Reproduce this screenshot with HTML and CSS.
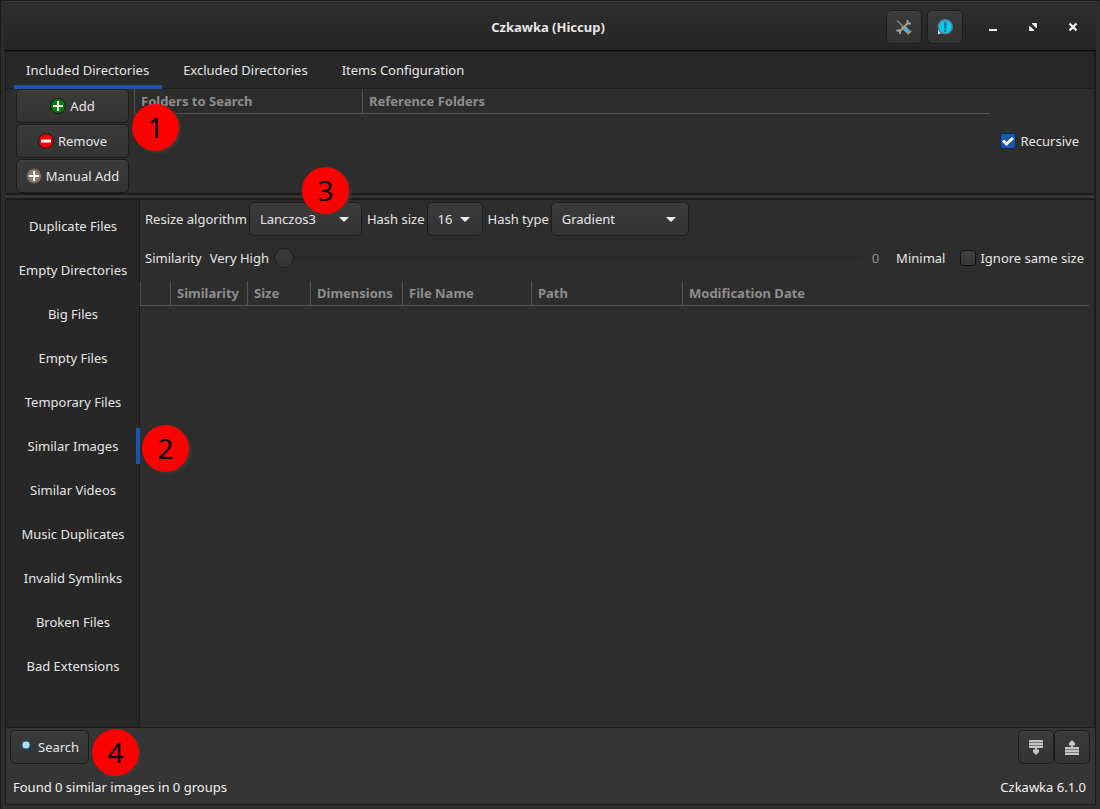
FILE: index.html
```html
<!DOCTYPE html>
<html lang="en">
<head>
<meta charset="utf-8">
<title>Czkawka (Hiccup)</title>
<link rel="stylesheet" href="styles.css">
</head>
<body>
<div class="window">
  <header class="titlebar">
    <h1 class="title">Czkawka (Hiccup)</h1>
    <div class="title-actions">
      <button class="btn icon-btn" type="button" aria-label="Settings">
        <svg width="16" height="16" viewBox="0 0 16 16">
          <path d="M1 1.500L8 8.500" stroke="#8b8b8b" stroke-width="1.500"/>
          <path d="M3 13L12 4" stroke="#9d9d9d" stroke-width="2"/>
          <path d="M11.500 1v3.500H15M.5 11.500H4V15" stroke="#a4a4a4" stroke-width="1.800" fill="none"/>
          <path d="M5.500 9.500l4-3" stroke="#c9971c" stroke-width="1.800"/>
          <path d="M8 8.500L13 13.500" stroke="#5fa9d3" stroke-width="4.500"/>
          <path d="M11.500 15.500l4-3.500" stroke="#b59a35" stroke-width="1.300"/>
        </svg>
      </button>
      <button class="btn icon-btn" type="button" aria-label="About">
        <svg width="16" height="16" viewBox="0 0 16 16">
          <path d="M1 10.500v5l4-1.500z" fill="#d8d8d8"/>
          <circle cx="8.300" cy="7.800" r="7" fill="#00ccf8" stroke="#5b7c86" stroke-width="1.400"/>
          <path d="M7.300 3h2v6.700h-2zM7.300 10.700h2v2h-2z" fill="#28626f"/>
        </svg>
      </button>
    </div>
    <div class="window-controls">
      <button class="control" type="button" aria-label="Minimize"><svg width="16" height="16" viewBox="0 0 16 16"><path d="M4 10h8v2H4z" fill="#eee"/></svg></button>
      <button class="control" type="button" aria-label="Restore"><svg width="16" height="16" viewBox="0 0 16 16"><path d="M7 4h5v5h-1L7 5zM4 7h1l4 4v1H4z" fill="#eee"/></svg></button>
      <button class="control" type="button" aria-label="Close"><svg width="16" height="16" viewBox="0 0 16 16"><path d="M4.500 4.500l7 7M11.500 4.500l-7 7" stroke="#eee" stroke-width="2.300"/></svg></button>
    </div>
  </header>

  <main class="body">
    <section class="upper">
      <nav class="tabs">
        <button class="tab tab-active" type="button">Included Directories</button>
        <button class="tab" type="button">Excluded Directories</button>
        <button class="tab" type="button">Items Configuration</button>
      </nav>
      <div class="directories">
        <div class="dir-buttons">
          <button class="btn" type="button"><svg width="16" height="16" viewBox="0 0 16 16"><circle cx="8" cy="8" r="7.400" fill="#078007" stroke="#171717"/><path d="M8 3v10M3 8h10" stroke="#fff" stroke-width="2"/></svg>Add</button>
          <button class="btn" type="button"><svg width="16" height="16" viewBox="0 0 16 16"><circle cx="8" cy="8" r="7.400" fill="#f00" stroke="#171717"/><path d="M3 8h10" stroke="#fff" stroke-width="3"/></svg>Remove</button>
          <button class="btn" type="button"><svg width="16" height="16" viewBox="0 0 16 16"><circle cx="8" cy="8" r="7.400" fill="#8d776b" stroke="#4b403b"/><path d="M8 3v10M3 8h10" stroke="#fff" stroke-width="2"/></svg>Manual Add</button>
        </div>
        <div class="dir-table">
          <table class="tree">
            <colgroup><col class="w-folders"><col></colgroup>
            <thead><tr><th>Folders to Search</th><th>Reference Folders</th></tr></thead>
          </table>
        </div>
        <label class="check recursive"><input type="checkbox" checked>Recursive</label>
      </div>
    </section>

    <div class="splitter"></div>

    <section class="lower">
      <nav class="sidebar">
        <button class="side-item" type="button">Duplicate Files</button>
        <button class="side-item" type="button">Empty Directories</button>
        <button class="side-item" type="button">Big Files</button>
        <button class="side-item" type="button">Empty Files</button>
        <button class="side-item" type="button">Temporary Files</button>
        <button class="side-item side-active" type="button">Similar Images</button>
        <button class="side-item" type="button">Similar Videos</button>
        <button class="side-item" type="button">Music Duplicates</button>
        <button class="side-item" type="button">Invalid Symlinks</button>
        <button class="side-item" type="button">Broken Files</button>
        <button class="side-item" type="button">Bad Extensions</button>
      </nav>
      <div class="results">
        <div class="options">
          <label for="resize">Resize algorithm</label>
          <select id="resize" class="combo combo-resize"><option>Lanczos3</option></select>
          <label for="size">Hash size</label>
          <select id="size" class="combo combo-size"><option>16</option></select>
          <label for="type">Hash type</label>
          <select id="type" class="combo combo-type"><option>Gradient</option></select>
        </div>
        <div class="similarity">
          <label for="similarity">Similarity</label>
          <span class="very-high">Very High</span>
          <input id="similarity" class="slider" type="range" min="0" max="40" value="0">
          <output class="value" for="similarity">0</output>
          <span class="minimal">Minimal</span>
          <label class="check"><input type="checkbox">Ignore same size</label>
        </div>
        <table class="tree">
          <colgroup><col class="w-tick"><col class="w-similarity"><col class="w-size"><col class="w-dimensions"><col class="w-name"><col class="w-path"><col></colgroup>
          <thead><tr><th></th><th>Similarity</th><th>Size</th><th>Dimensions</th><th>File Name</th><th>Path</th><th>Modification Date</th></tr></thead>
        </table>
      </div>
    </section>

    <footer class="bottom">
      <div class="actions">
        <button class="btn search" type="button"><svg width="16" height="16" viewBox="0 0 16 16"><path d="M10.500 9l4.500 4.500" stroke="#0c3c69" stroke-width="2.200"/><circle cx="8" cy="6" r="4" fill="#a9e1fc" stroke="#265778" stroke-width=".8"/></svg>Search</button>
        <div class="panel-toggles">
          <button class="btn icon-btn" type="button" aria-label="Toggle results panel"><svg width="16" height="16" viewBox="0 0 16 16"><path d="M1 1h14v8H1z" fill="#777"/><path d="M1 1h14v2H1zM1 4h14v2H1zM1 7h14v2H1zM7 9h2v1.500h2V13l-3 3-3-3v-2.500h2z" fill="#c4c4c4"/></svg></button>
          <button class="btn icon-btn" type="button" aria-label="Toggle directories panel"><svg width="16" height="16" viewBox="0 0 16 16"><path d="M1 8h14v8H1z" fill="#777"/><path d="M1 8h14v2H1zM1 11h14v2H1zM1 14h14v2H1zM7 8h2V6.500h2V4L8 1 5 4v2.500h2z" fill="#c4c4c4"/></svg></button>
        </div>
      </div>
      <div class="status"><span>Found 0 similar images in 0 groups</span><span>Czkawka 6.1.0</span></div>
    </footer>
  </main>
</div>

<div class="marker marker-1">1</div>
<div class="marker marker-2">2</div>
<div class="marker marker-3">3</div>
<div class="marker marker-4">4</div>
</body>
</html>
```
FILE: styles.css
```css
* { box-sizing: border-box; }

body {
  margin: 0;
  position: relative;
  background: #191919;
  color: #e6e6e6;
  font: 13px/18px "Noto Sans", "Open Sans", sans-serif;
}

button, select { font: inherit; color: inherit; }
button { cursor: default; }
svg { flex: none; display: block; }

.window {
  display: flex;
  flex-direction: column;
  min-height: 100vh;
  padding: 0 4px 4px;
  border: 1px solid #191919;
  border-width: 1px 0 0 1px;
  background: #2d2d2d;
}

.titlebar {
  display: flex;
  align-items: center;
  height: 50px;
  margin-left: -1px;
  padding: 2px 7px 0 0;
  border-top: 1px solid #3c3c3c;
  border-bottom: 1px solid #0c0c0c;
  background: linear-gradient(#2e2e2e, #252525);
}
.title {
  flex: 1;
  margin: 0;
  padding-left: 206px;
  font-size: 13px;
  font-weight: 700;
  text-align: center;
}
.title-actions { display: flex; gap: 5px; margin-right: 14px; }
.window-controls { display: flex; gap: 8px; }
.control {
  display: grid;
  place-items: center;
  width: 32px;
  height: 32px;
  padding: 0;
  border: 0;
  background: none;
}

.btn {
  display: flex;
  align-items: center;
  justify-content: center;
  gap: 4px;
  height: 34px;
  padding: 0 8px;
  border: 1px solid #1c1c1c;
  border-radius: 5px;
  background: linear-gradient(#3b3b3b, #333);
  box-shadow: inset 0 1px #404040;
}
.icon-btn { width: 36px; padding: 0; }

.body {
  flex: 1;
  display: flex;
  flex-direction: column;
  border: 1px solid #1b1b1b;
  border-left: 0;
  background: #2d2d2d;
}

.upper { border: 1px solid #1b1b1b; border-width: 0 1px 2px; }
.tabs {
  display: flex;
  gap: 9px;
  height: 37px;
  padding: 0 8px;
  border-bottom: 1px solid #1d1d1d;
  background: #282828;
}
.tab {
  height: 37px;
  padding: 0 13px 2px 12px;
  border: 0 solid transparent;
  border-width: 4px 0;
  background: none;
}
.tab-active { border-bottom-color: #1a56a5; }

.directories { display: flex; padding: 0 10px; }
.dir-buttons { display: flex; flex-direction: column; gap: 1px; width: 113px; }
.dir-table { flex: 1; margin: 0 10px 0 5px; }

.tree { width: 100%; table-layout: fixed; border-collapse: separate; border-spacing: 0; }
.tree th {
  height: 25px;
  padding: 0 0 0 6px;
  border-left: 1px solid #555;
  border-bottom: 1px solid #555;
  color: #8d8d8d;
  font-weight: 700;
  text-align: left;
  white-space: nowrap;
}
.w-folders { width: 228px; }
.w-tick { width: 30px; }
.w-similarity { width: 77px; }
.w-size { width: 63px; }
.w-dimensions { width: 92px; }
.w-name { width: 129px; }
.w-path { width: 151px; }

.check { display: flex; align-items: center; gap: 4px; white-space: nowrap; }
.check input {
  appearance: none;
  width: 16px;
  height: 16px;
  margin: 0;
  border: 1px solid #101010;
  border-radius: 3px;
  background: linear-gradient(#3f3f3f, #383838);
}
.check input:checked {
  border-color: #092b57;
  background: url("data:image/svg+xml,%3Csvg xmlns='http://www.w3.org/2000/svg' viewBox='0 0 14 14'%3E%3Cpath d='M2 6.500l3.500 3.500L12 4' fill='none' stroke='white' stroke-width='3'/%3E%3C/svg%3E") #1859ac;
}
.recursive { padding-right: 5px; }

.splitter { height: 3px; background: #353535; }

.lower { flex: 1; display: flex; border: 1px solid #1b1b1b; border-top-width: 2px; }
.sidebar {
  display: flex;
  flex-direction: column;
  gap: 8px;
  width: 134px;
  padding: 8px 0;
  border-right: 1px solid #1b1b1b;
  background: #272727;
}
.side-item {
  height: 36px;
  margin-right: -1px;
  padding: 0;
  border: 0 solid transparent;
  border-width: 0 4px;
  background: none;
}
.side-active { border-right-color: #1a56a5; }

.results { flex: 1; min-width: 0; padding: 2px 5px 0 0; }
.options { display: flex; align-items: center; gap: 5px; padding-left: 5px; }
.options label { margin-right: -3px; }
.combo {
  appearance: none;
  height: 34px;
  padding: 0 26px 0 10px;
  border: 1px solid #1c1c1c;
  border-radius: 5px;
  background:
    url("data:image/svg+xml,%3Csvg xmlns='http://www.w3.org/2000/svg' width='10' height='5'%3E%3Cpath d='M0 0h10L5 5z' fill='%23eee'/%3E%3C/svg%3E") no-repeat right 12px center,
    linear-gradient(#3b3b3b, #333);
}
.combo-resize { width: 113px; }
.combo-size { width: 56px; }
.combo-type { width: 138px; }

.similarity {
  display: flex;
  align-items: center;
  height: 44px;
  margin-bottom: 1px;
  padding: 0 5px;
  white-space: nowrap;
}
.very-high { margin: 0 5px 0 8px; }
.slider { appearance: none; flex: 1; min-width: 0; height: 20px; margin: 0; background: none; }
.slider::-webkit-slider-runnable-track { height: 4px; background: #292929; border-radius: 2px; }
.slider::-webkit-slider-thumb {
  appearance: none;
  width: 20px;
  height: 20px;
  margin-top: -8px;
  border: 1px solid #1c1c1c;
  border-radius: 50%;
  background: linear-gradient(#3b3b3b, #353535);
}
.value { margin: 0 17px 0 9px; color: #8d8d8d; }
.minimal { margin-right: 15px; }

.bottom {
  height: 76px;
  padding: 2px 5px 0 4px;
  border-left: 1px solid #1b1b1b;
  background: #353535;
}
.actions { display: flex; justify-content: space-between; }
.search { padding: 0 9px 0 7px; }
.panel-toggles { display: flex; }
.status {
  display: flex;
  justify-content: space-between;
  padding: 14px 4px 0 3px;
  color: #f2f2f2;
}

.marker {
  position: absolute;
  width: 47px;
  height: 47px;
  border-radius: 50%;
  background: #f00;
  box-shadow: 2px 2px 3px #3c3c3c;
  color: #000;
  font-size: 28px;
  line-height: 47px;
  text-align: center;
}
.marker-1 { left: 132px; top: 104px; }
.marker-2 { left: 142px; top: 425px; }
.marker-3 { left: 302px; top: 167px; }
.marker-4 { left: 92px; top: 729px; }
```
